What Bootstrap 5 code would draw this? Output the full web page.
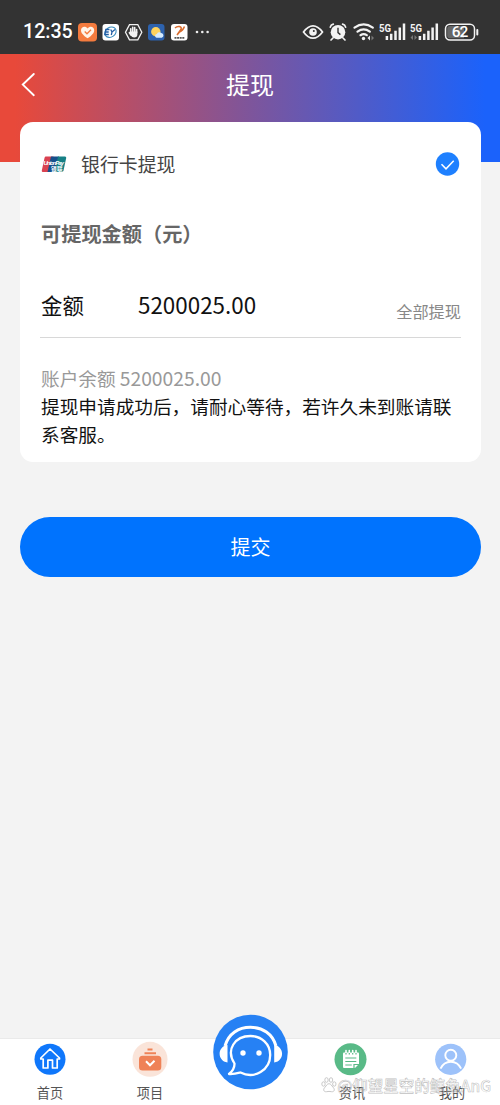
<!DOCTYPE html>
<html lang="zh-CN">
<head>
<meta charset="utf-8">
<meta name="viewport" content="width=device-width, initial-scale=1">
<title>提现</title>
<link href="https://cdn.jsdelivr.net/npm/bootstrap@5.3.0/dist/css/bootstrap.min.css" rel="stylesheet">
<style>
body{font-family:"Noto Sans CJK SC",sans-serif;background:#f3f3f3;height:1105px;overflow:hidden;color:#111}
svg{display:block;flex:none}
.status{height:54px;background:#333;padding:10px 20px 0 23px}
.clock{font:500 19.6px/44px Roboto,sans-serif;width:55px}
.hero{height:108px;background:linear-gradient(90deg,#e8493a 0%,#e8493a 3%,#7e559b 50%,#1b62fb 97%,#1b62fb 100%);padding:12px 20px 0}
.hero h1{font-size:24px;line-height:36px;font-weight:400}
.panel{margin:-40px 19px 0 20px;height:340px;border-radius:13px;padding:27px 20px 0 21px}
.bank{font-size:18.9px;line-height:30px;color:#444}
.bank-name{margin-left:14px}
.caption{font-size:20.2px;line-height:30px;font-weight:700;color:#666;margin-top:40px}
.amount{height:59px;margin-top:30px;margin-left:-1px;padding-left:1px;border-bottom:1px solid #d8d8d8}
.amount-label{font-size:21.4px;line-height:52px;width:97px}
.amount-value{font-size:22.4px;line-height:51px}
.all{font-size:16.2px;line-height:24px;color:#888;margin-top:20px}
.balance{font-size:18.65px;line-height:28px;color:#999;margin-top:26px}
.balance span{font-size:19.3px}
.note{font-size:18.67px;line-height:28px;white-space:nowrap}
.submit{margin:55px 19px 0 20px;height:60px;font-size:20px;background:#0073fe}
.tabs{height:67px;border-top:1px solid #eaeaea}
.tab-item{width:100px;font-size:13.2px;color:#555}
.tab-item .lbl{line-height:20px;margin-top:6px}
.support{left:50%;top:-25px;transform:translateX(-50%)}
.watermark{right:9px;bottom:8px;font-size:15.5px;line-height:24px;font-weight:500;color:rgba(255,255,255,.4);-webkit-text-stroke:.6px rgba(125,125,125,.5);white-space:nowrap}
</style>
</head>
<body class="d-flex flex-column">
<div class="status d-flex align-items-center justify-content-between text-white">
  <div class="d-flex align-items-center">
    <span class="clock">12:35</span>
    <svg width="136" height="20" viewBox="78 22 136 20">
      <rect x="78" y="23" width="19" height="18.5" rx="4" fill="#f47b3e"/>
      <path d="M87.6 38.3C83 35.2 81 32.8 81 30.2c0-3.8 4.7-4.6 6.6-1.6 2-3 6.6-2.2 6.6 1.6 0 2.600-2 5-6.600 8.100z" fill="#fff4e9"/>
      <path d="m84.700 31.500 2.300 2.300 4-4" fill="none" stroke="#f47b3e" stroke-width="1.300"/>
      <rect x="102.500" y="24" width="16.500" height="16.500" rx="3" fill="#fff"/>
      <ellipse cx="110.500" cy="32.200" rx="6" ry="4.800" transform="rotate(-35 110.500 32.200)" fill="none" stroke="#398bbd" stroke-width="1.100"/>
      <path d="M109.500 29.500h-3.700l-1 5h4m-3.300-2.500h3.200m2-2.500 1.300 2.500 3-2.500m-3 2.500-.7 3" fill="none" stroke="#225ea5" stroke-width="1.300"/>
      <path d="M129.500 24.600h8.300l4 7.700-4 7.600h-8.300l-4-7.600z" fill="none" stroke="#f2f2f2" stroke-width="1.300"/>
      <path d="M130.700 32v-3.200M132.700 32v-4.700M134.700 32v-4.400M136.600 32.500v-3M131 35l-1.600-2.300" fill="none" stroke="#f2f2f2" stroke-width="1.600" stroke-linecap="round"/>
      <path d="M129.900 31.500h7.500v2.700q0 3.300-3.300 3.300-2.200 0-3.100-1.800l-1.100-2z" fill="#f2f2f2"/>
      <rect x="148" y="24" width="16.500" height="16.500" rx="3" fill="#2d62ae"/>
      <circle cx="155.800" cy="31.700" r="4.700" fill="#ffd35d"/>
      <path d="M156.500 37.800a2 2 0 0 1 .4-3.900 2.600 2.600 0 0 1 4.400-.8 2.400 2.400 0 0 1 .4 4.700z" fill="#d6ecff"/>
      <rect x="171" y="24" width="16.500" height="16.500" rx="3" fill="#fff"/>
      <path d="M175 28q2-2 4.500-1.500 3 1 1 3.500l-3.500 5M184.500 26.500q-1.500 4-5 5.500l-2.500 3" fill="none" stroke="#d86c2e" stroke-width="1.500"/>
      <path d="M174.500 37.800h10" stroke="#555" stroke-width="1.800" stroke-dasharray="2 .6"/>
      <g fill="#eee"><circle cx="197" cy="32" r="1.300"/><circle cx="202.300" cy="32" r="1.300"/><circle cx="207.600" cy="32" r="1.300"/></g>
    </svg>
  </div>
  <svg width="178" height="22" viewBox="302 21 178 22">
    <path d="M303.500 32q4.500-6.200 9.500-6.200t9.500 6.200q-4.500 6.200-9.500 6.200t-9.500-6.200z" fill="none" stroke="#f3f3f3" stroke-width="1.700"/>
    <circle cx="313" cy="32" r="3.800" fill="#f3f3f3"/><circle cx="313.800" cy="31" r="1" fill="#333"/>
    <circle cx="338" cy="32.200" r="7.300" fill="#f3f3f3"/>
    <path d="m333 38-2 2m12-2 2 2M330.300 27.200q.5-2.400 3-3m12.300 3q-.5-2.400-3-3" fill="none" stroke="#f3f3f3" stroke-width="1.700" stroke-linecap="round"/>
    <path d="M338 27.800v4.800l2.400 2" fill="none" stroke="#333" stroke-width="1.400"/>
    <path d="M354.500 27.600q9.200-6.400 18.300 0M357.500 31.600q6.200-4.300 12.300 0M360.500 35.200q3.200-2 6.300 0" fill="none" stroke="#f3f3f3" stroke-width="2.200" stroke-linecap="round"/>
    <circle cx="363.500" cy="38.500" r="1.700" fill="#f3f3f3"/><path d="m370 35.500-2.500 2.500 2.500 2.500z" fill="#eee"/><path d="m371.500 35.500 2.500 2.500-2.500 2.500z" fill="#777"/>
    <g font-family="Roboto,sans-serif" font-size="10.500" font-weight="700" fill="#f3f3f3"><text x="379" y="32" textLength="12" lengthAdjust="spacingAndGlyphs">5G</text><text x="410" y="32" textLength="12" lengthAdjust="spacingAndGlyphs">5G</text></g>
    <path d="M386.900 40v-4M391.200 40v-6.300M395.500 40v-9.300M399.800 40v-12.500M404 40v-16.500M419.900 40v-4M424.200 40v-6.300M428.400 40v-9.300M432.600 40v-12.500M436.800 40v-16.500" stroke="#f3f3f3" stroke-width="2.500"/>
    <path d="m413 35-2.500 2.500 2.500 2.500zm1.500 0 2.500 2.500-2.500 2.500z" fill="#777"/>
    <rect x="445.500" y="24.200" width="29" height="15.800" rx="4.500" fill="#333" stroke="#f3f3f3" stroke-width="1.500"/>
    <path d="M450 26h14v12.200h-14q-2.800 0-2.800-3v-6.200q0-3 2.800-3z" fill="#666"/>
    <path d="M477.300 30v4.600" stroke="#f3f3f3" stroke-width="2" stroke-linecap="round"/>
    <text x="460" y="37.400" text-anchor="middle" font-family="Roboto,sans-serif" font-size="15.500" font-weight="500" fill="#fff" textLength="16.500">62</text>
  </svg>
</div>
<header class="hero">
  <div class="d-flex align-items-center text-white">
    <svg width="20" height="30" viewBox="20 69 20 30"><path d="M33.800 74 22.800 84.600 33.800 95.200" fill="none" stroke="#fff" stroke-width="1.900" stroke-linecap="round"/></svg>
    <h1 class="flex-fill text-center mb-0">提现</h1><div style="width:20px"></div>
  </div>
</header>
<main>
  <section class="panel bg-white">
    <div class="bank d-flex align-items-center">
      <svg width="26" height="18" viewBox="41 155 26 18">
        <path d="M45.500 156.500h8l-3.500 15.500h-7q-1.500 0-1.200-1.500l2.700-12.500q.3-1.500 1-1.500z" fill="#d94251"/>
        <path d="M51 156.500h8l-3.500 15.500h-8z" fill="#174f8b"/><path d="M58 156.500h7q1.500 0 1.200 1.500l-2.700 12.500q-.4 1.500-1.500 1.500h-7.500z" fill="#168086"/>
        <text x="43.500" y="164.700" font-family="Liberation Sans,sans-serif" font-size="6" font-style="italic" font-weight="700" fill="#fff" textLength="20.500">UnionPay</text>
        <text x="51" y="170.500" font-size="5.600" font-weight="700" fill="#fff" textLength="11.500">银联</text>
      </svg>
      <span class="bank-name flex-fill">银行卡提现</span>
      <svg width="26" height="26" viewBox="0 0 26 26"><circle cx="12.500" cy="13" r="11.700" fill="#1e80ff"/><path d="m6.500 13.200 4.500 4.600 7.700-8" fill="none" stroke="#fff" stroke-width="1.500"/></svg>
    </div>
    <div class="caption">可提现金额（元）</div>
    <div class="amount d-flex">
      <span class="amount-label">金额</span><span class="amount-value flex-fill">5200025.00</span><span class="all">全部提现</span>
    </div>
    <div class="balance">账户余额 <span>5200025.00</span></div>
    <div class="note">提现申请成功后，请耐心等待，若许久未到账请联<br>系客服。</div>
  </section>
  <div class="d-grid"><button class="submit btn btn-primary rounded-pill border-0 p-0">提交</button></div>
</main>
<nav class="tabs mt-auto bg-white position-relative d-flex">
  <div class="tab-item d-flex flex-column align-items-center">
    <svg class="mt-0" width="36" height="38" viewBox="0 -2 36 38"><circle cx="18" cy="18.300" r="15.500" fill="#0f77fb"/><path d="M8.800 17 18 8l9.500 9v1h-2.300v9H20.500v-7.800h-4.600V27h-4.700v-9H8.800z" fill="none" stroke="#fff" stroke-width="1.700" stroke-linejoin="round"/></svg>
    <span class="lbl">首页</span>
  </div>
  <div class="tab-item d-flex flex-column align-items-center">
    <svg width="36" height="38" viewBox="0 -2 36 38"><circle cx="18" cy="18.300" r="17.500" fill="#fae4d9"/><path d="M15.500 8.500h5M12.500 12.200H24" stroke="#ef8257" stroke-width="2"/><rect x="7" y="14.800" width="22.300" height="14.700" rx="3.500" fill="#ef8257"/><path d="m14 20.300 4 4 4.500-4.500" fill="none" stroke="#fff" stroke-width="2"/></svg>
    <span class="lbl">项目</span>
  </div>
  <div class="tab-item"></div>
  <div class="tab-item d-flex flex-column align-items-center">
    <svg width="36" height="38" viewBox="0 -2 36 38"><circle cx="18.500" cy="18.300" r="16" fill="#59ba87"/><path d="M12 11.500h14q1 0 1 1V23l-4 4H12q-1 0-1-1V12.500q0-1 1-1z" fill="#fff"/><path d="M14 9.500v3m3.300-3v3m3.400-3v3m3.300-3v3" stroke="#fff" stroke-width="1.600" stroke-linecap="round"/><path d="M14 12v1.500m3.300-1.500v1.500m3.400-1.500v1.500m3.300-1.500v1.500M13.300 17h11M13.300 20.500h11M13.300 24h6.500M22 27.500v-4h5.500" fill="none" stroke="#59ba87" stroke-width="1.200"/></svg>
    <span class="lbl ps-1">资讯</span>
  </div>
  <div class="tab-item d-flex flex-column align-items-center">
    <svg width="36" height="38" viewBox="0 -2 36 38"><circle cx="18.700" cy="18.300" r="15.600" fill="#9dc2fa"/><circle cx="18.800" cy="14.200" r="5.500" fill="none" stroke="#fff" stroke-width="1.900"/><path d="M8.500 27.700q3.200-7 10.300-7t10.300 7" fill="none" stroke="#fff" stroke-width="1.900"/></svg>
    <span class="lbl ps-1">我的</span>
  </div>
  <svg class="support position-absolute" width="76" height="76" viewBox="212 1014 76 76">
    <circle cx="250.500" cy="1052" r="37.300" fill="#2681f4"/>
    <path d="M225 1046c3.500-12.500 13.500-18.700 25.500-18.700s22 6.200 25.500 18.700" fill="none" stroke="#fff" stroke-width="3"/>
    <path d="M227.500 1045v17.500c-10.500-1.500-10.500-16 0-17.500zM274.200 1045v17.500c10.500-1.500 10.500-16 0-17.500z" fill="#fff"/>
    <path d="M234.500 1063.500c-9-14 .5-27.500 16-27.500 11 0 19.700 8 19.700 19 0 15-15.700 24.500-29.700 17.500-3 .8-6 1.800-11.500 1.500 4-3.200 5.500-6 5.500-10z" fill="none" stroke="#fff" stroke-width="2.300" stroke-linejoin="round"/>
    <circle cx="243" cy="1053" r="2.700" fill="#fff"/><circle cx="259" cy="1053" r="2.700" fill="#fff"/>
  </svg>
  <div class="watermark position-absolute d-flex align-items-center">
    <svg width="16" height="16" viewBox="0 0 16 16" fill="#fff" stroke="#bbb" stroke-width=".8"><ellipse cx="2.500" cy="7" rx="1.700" ry="2.200"/><ellipse cx="5.500" cy="3" rx="1.700" ry="2.300"/><ellipse cx="10" cy="3" rx="1.700" ry="2.300"/><ellipse cx="13.300" cy="7" rx="1.700" ry="2.200"/><path d="M8 6.700c2 0 2.500 2 4 3.500 2.500 2.500 1 5-1.500 4.500-2-.4-3-.4-5 0-2.500.5-4-2-1.500-4.500C5.500 8.700 6 6.700 8 6.700z"/></svg>
    <span>@仰望星空的鲸鱼AnG</span>
  </div>
</nav>
<script src="https://cdn.jsdelivr.net/npm/bootstrap@5.3.0/dist/js/bootstrap.bundle.min.js"></script>
</body>
</html>
